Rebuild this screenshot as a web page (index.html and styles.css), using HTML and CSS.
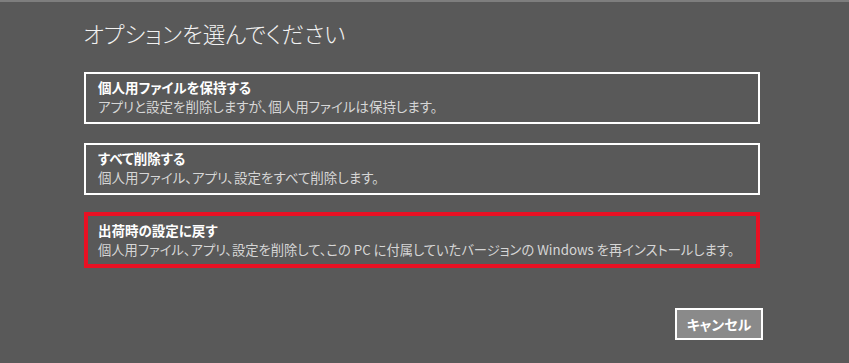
FILE: index.html
```html
<!DOCTYPE html>
<html lang="ja">
<head>
<meta charset="utf-8">
<title>オプションを選んでください</title>
<link rel="stylesheet" href="styles.css">
</head>
<body>
<div class="screen">
  <h1 class="title">オプションを選んでください</h1>
  <div class="options">
    <div class="option">
      <div class="opt-head">個人用ファイルを保持する</div>
      <div class="opt-desc">アプリと設定を削除しますが、個人用ファイルは保持します。</div>
    </div>
    <div class="option">
      <div class="opt-head">すべて削除する</div>
      <div class="opt-desc">個人用ファイル、アプリ、設定をすべて削除します。</div>
    </div>
    <div class="option option-selected">
      <div class="opt-head">出荷時の設定に戻す</div>
      <div class="opt-desc">個人用ファイル、アプリ、設定を削除して、この PC に付属していたバージョンの Windows を再インストールします。</div>
    </div>
  </div>
  <div class="footer">
    <button class="cancel">キャンセル</button>
  </div>
</div>
</body>
</html>
```

FILE: styles.css
```css
html, body {
  margin: 0;
  padding: 0;
}
body {
  background: #595959;
  width: 849px;
  height: 363px;
  overflow: hidden;
  font-family: "Noto Sans CJK JP", "Noto Sans", sans-serif;
  font-feature-settings: "palt";
  color: #ffffff;
}
.screen {
  border-top: 2px solid #7e7e7e;
  padding-left: 84px;
  box-sizing: border-box;
  height: 363px;
}
.title {
  margin: 16px 0 24px -1px;
  font-size: 22.5px;
  line-height: 30px;
  font-weight: 300;
  color: #f2f2f2;
}
.options {
  display: flex;
  flex-direction: column;
  gap: 19px;
  width: 676px;
}
.option {
  border: 2px solid #ffffff;
  padding: 4px 12px 6px;
}
.option-selected {
  border: 4px solid #e81123;
  padding: 5px 10px 5px;
  margin-top: -2px;
}
.opt-head {
  font-size: 13.5px;
  line-height: 19px;
  font-weight: 700;
  color: #ffffff;
}
.opt-desc {
  font-size: 13.5px;
  line-height: 19px;
  font-weight: 400;
  color: #d6d6d6;
  white-space: nowrap;
}
.option-selected .opt-desc {
  font-size: 13.3px;
}
.footer {
  display: flex;
  justify-content: flex-end;
  width: 679px;
  margin-top: 40px;
}
.cancel {
  width: 88px;
  height: 32px;
  border: 2px solid #ffffff;
  background: #8a8a8a;
  color: #ffffff;
  font-family: "Noto Sans CJK JP", "Noto Sans", sans-serif;
  font-feature-settings: "palt";
  font-size: 14px;
  font-weight: 700;
  padding: 0;
}
```
